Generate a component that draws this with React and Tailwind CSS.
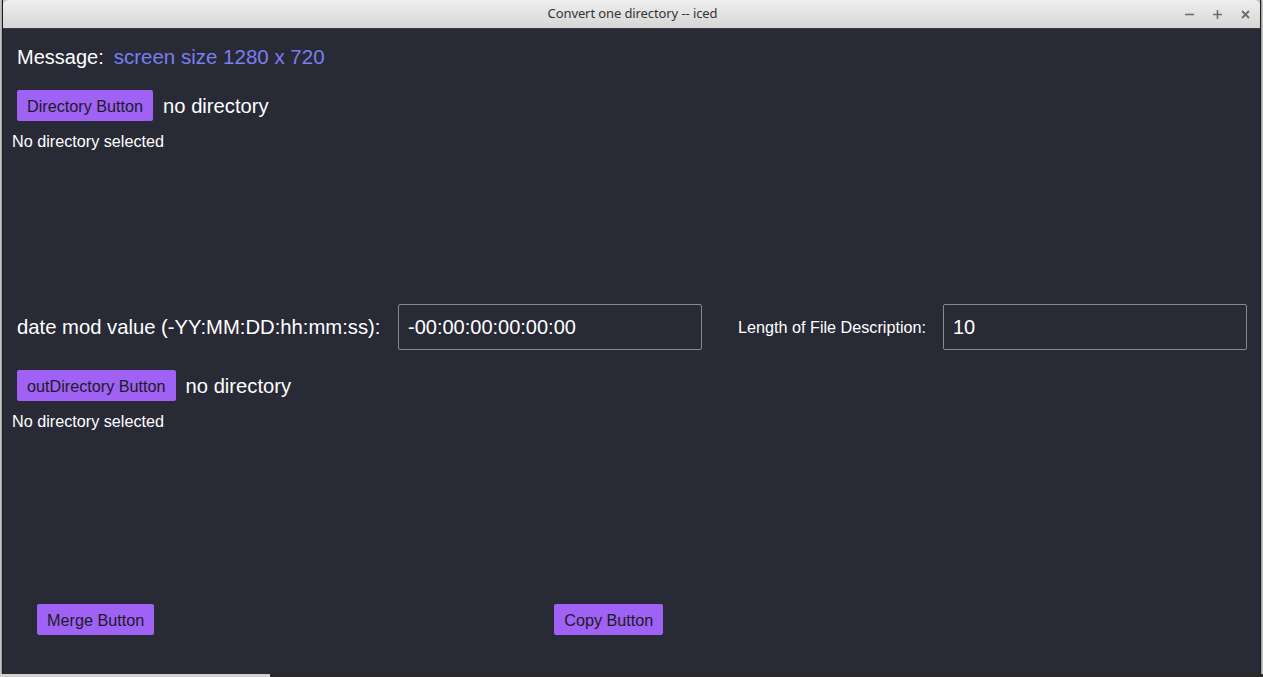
import React from "react";

function PurpleButton({ children, className = "" }) {
  return (
    <button
      className={`bg-[#9f62f4] text-[#1b1b26] text-[16.2px] leading-[20px] px-[10px] h-[31px] rounded-[2px] ${className}`}
    >
      {children}
    </button>
  );
}

function TitleBar() {
  return (
    <div className="relative h-[29px] rounded-t-[6px] bg-gradient-to-b from-[#efefef] to-[#d6d6d6] border-b border-[#3a3a3a] flex items-center justify-center">
      <span className="text-[13px] text-[#333] font-['Noto_Sans',sans-serif] tracking-[-0.1px] ml-[2px]">
        Convert one directory -- iced
      </span>
      <div className="absolute right-[8px] top-0 h-full flex items-center gap-[15px] text-[#6e6e6e]">
        <svg width="13" height="13" viewBox="0 0 13 13">
          <path d="M2 6.5h9" stroke="currentColor" strokeWidth="1.6" />
        </svg>
        <svg width="13" height="13" viewBox="0 0 13 13">
          <path d="M2 6.5h9M6.5 2v9" stroke="currentColor" strokeWidth="1.6" />
        </svg>
        <svg width="13" height="13" viewBox="0 0 13 13">
          <path d="M3 3l7 7M10 3l-7 7" stroke="currentColor" strokeWidth="1.8" />
        </svg>
      </div>
    </div>
  );
}

export default function App() {
  return (
    <div className="w-[1263px] h-[677px] overflow-hidden bg-[#c9c9c9] font-['Liberation_Sans',Arial,sans-serif]">
      <div className="ml-[2px] w-[1259px] h-[674px] flex flex-col border-l border-r border-[#1c1c1c] shadow-[0_0_2px_rgba(0,0,0,0.5)]">
        <TitleBar />
        <div className="flex-1 bg-[#282a36] text-white flex flex-col">
          <div className="mt-[16px] pl-[14px] flex items-center gap-[10px] text-[20px] leading-[24px]">
            <span>Message:</span>
            <span className="text-[#7a7ef0] text-[20.5px]">screen size 1280 x 720</span>
          </div>

          <div className="mt-[21px] pl-[14px] flex items-center gap-[10px]">
            <PurpleButton>Directory Button</PurpleButton>
            <span className="text-[20.2px] leading-[24px]">no directory</span>
          </div>
          <div className="mt-[10px] pl-[9px] text-[16.2px] leading-[20px]">No directory selected</div>

          <div className="mt-[153px] pl-[14px] flex items-center">
            <span className="text-[20.25px] leading-[24px] w-[381px]">date mod value (-YY:MM:DD:hh:mm:ss):</span>
            <div className="w-[304px] h-[46px] border border-[#8a8a8a] rounded-[2px] px-[9px] flex items-center text-[20px]">
              -00:00:00:00:00:00
            </div>
            <span className="ml-[36px] w-[205px] text-[16.2px]">Length of File Description:</span>
            <div className="w-[304px] h-[46px] border border-[#8a8a8a] rounded-[2px] px-[9px] flex items-center text-[20px]">
              10
            </div>
          </div>

          <div className="mt-[20px] pl-[14px] flex items-center gap-[10px]">
            <PurpleButton>outDirectory Button</PurpleButton>
            <span className="text-[20.2px] leading-[24px]">no directory</span>
          </div>
          <div className="mt-[10px] pl-[9px] text-[16.2px] leading-[20px]">No directory selected</div>

          <div className="mt-[173px] pl-[34px] flex items-center">
            <PurpleButton>Merge Button</PurpleButton>
            <PurpleButton className="ml-[400px]">Copy Button</PurpleButton>
          </div>
        </div>
      </div>
      <div className="h-[3px] flex">
        <div className="w-[270px] bg-[#d2d2d2]" />
        <div className="flex-1 bg-[#2a2a2a]" />
      </div>
    </div>
  );
}
